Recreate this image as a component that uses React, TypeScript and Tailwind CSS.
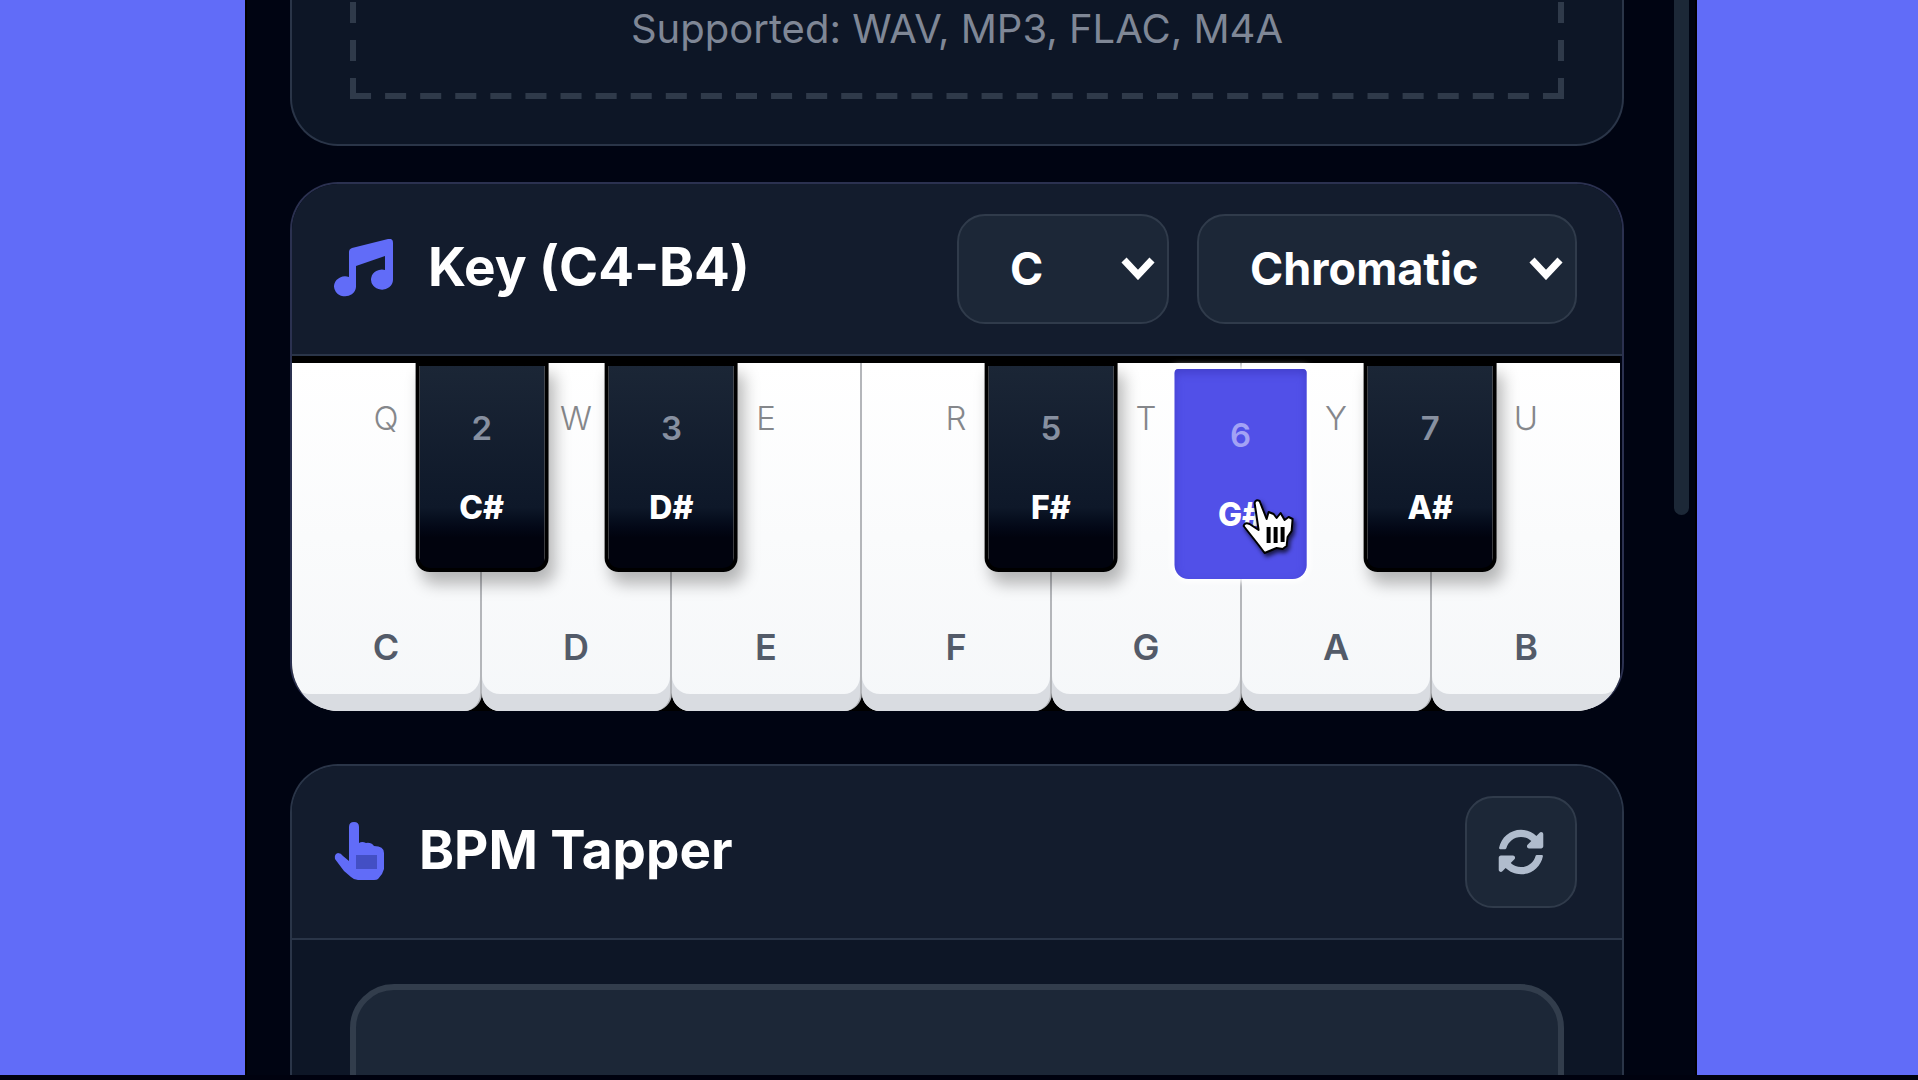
import { useState } from 'react'
import type { ReactNode } from 'react'
import { FaSyncAlt } from 'react-icons/fa'

type WhiteKey = {
  note: string
  shortcut: string
}

type BlackKey = {
  note: string
  shortcut: string
  // number of white keys to the left of it
  after: number
}

const whiteKeys: WhiteKey[] = [
  { note: 'C', shortcut: 'Q' },
  { note: 'D', shortcut: 'W' },
  { note: 'E', shortcut: 'E' },
  { note: 'F', shortcut: 'R' },
  { note: 'G', shortcut: 'T' },
  { note: 'A', shortcut: 'Y' },
  { note: 'B', shortcut: 'U' },
]

const blackKeys: BlackKey[] = [
  { note: 'C#', shortcut: '2', after: 1 },
  { note: 'D#', shortcut: '3', after: 2 },
  { note: 'F#', shortcut: '5', after: 4 },
  { note: 'G#', shortcut: '6', after: 5 },
  { note: 'A#', shortcut: '7', after: 6 },
]

const roots = ['C', 'C#', 'D', 'D#', 'E', 'F', 'F#', 'G', 'G#', 'A', 'A#', 'B']
const scales = ['Chromatic', 'Major', 'Minor']

function MusicIcon() {
  return (
    <svg viewBox="0 0 60 58" className="h-[58px] w-[60px] text-[#616cf8]" aria-hidden="true">
      <path
        fill="currentColor"
        d="M15 13Q15 10 18 9L54 0Q59 -1 59 4V41A11 10 0 1 1 51 31V17L22 27V48A11 10 0 1 1 15 38Z"
      />
    </svg>
  )
}

function TapIcon() {
  return (
    <svg viewBox="0 0 51 58" className="h-[58px] w-[51px] text-[#616cf8]" aria-hidden="true">
      <path
        fill="currentColor"
        d="M15 5Q15 0 20 0Q25 0 25 5V21Q28 19 32 21Q37 20 40 24Q50 24 50 31V47L48 52L44 57Q43 58 40 58H24Q20 58 17 55L10 49L1 37Q0 32 4 31Q7 31 9 34L15 39Z"
      />
      <rect x="22" y="33" width="21" height="14" fill="#434fc4" />
    </svg>
  )
}

function PointerCursor() {
  return (
    <svg
      viewBox="0 0 60 64"
      className="pointer-events-none absolute top-[124px] left-[66px] h-[64px] w-[60px] drop-shadow-[2px_3px_2px_rgba(0,0,0,0.7)]"
      aria-hidden="true"
    >
      <path
        d="M14 10Q15 6 19 8L26 26L28 19L33 21L36 25L40 20L44 27L48 24L52 26L51 38L47 44L46 53L42 56L36 55L24 60L18 52L3 33Q4 29 9 31L18 37Z"
        fill="white"
        stroke="black"
        strokeWidth="2"
        strokeLinejoin="round"
      />
      <path d="M28 34v16M35 34v16M42 34v15" stroke="black" strokeWidth="4" />
    </svg>
  )
}

function Select({ label, value, options, onChange, className }: {
  label: string
  value: string
  options: string[]
  onChange: (value: string) => void
  className: string
}) {
  return (
    <div className={`relative h-[110px] ${className}`}>
      <select
        aria-label={label}
        value={value}
        onChange={e => onChange(e.target.value)}
        className="h-full w-full appearance-none rounded-[28px] border-2 border-[#303b4b] bg-[#1c2737] pr-16 pl-[51px] text-[45px] font-bold text-white"
      >
        {options.map(option => (
          <option key={option}>{option}</option>
        ))}
      </select>
      <svg
        viewBox="0 0 36 24"
        className="pointer-events-none absolute top-[42px] right-[13px] h-6 w-9"
        aria-hidden="true"
      >
        <path d="M4 4l14 15L32 4" fill="none" stroke="white" strokeWidth="7" />
      </svg>
    </div>
  )
}

function CardHeader({ icon, title, children }: { icon: ReactNode; title: string; children: ReactNode }) {
  return (
    <div className="flex items-center justify-between border-b-2 border-[#2a3548] bg-[#131c2d] pt-[30px] pr-[45px] pb-[30px] pl-[42px]">
      <div className="flex items-center gap-[34px] pb-[3px]">
        {icon}
        <h2 className="text-[53px] leading-none font-bold text-white">{title}</h2>
      </div>
      {children}
    </div>
  )
}

function DropZone() {
  return (
    <div className="relative flex h-[99px] justify-center">
      <svg className="absolute inset-0 h-full w-full" aria-hidden="true">
        <g stroke="#2f3a4a" strokeWidth="12" strokeDasharray="21 14">
          <line x1="0" y1="100%" x2="100%" y2="100%" pathLength={1211} />
        </g>
        <g stroke="#2f3a4a" strokeWidth="12" strokeDasharray="21 17">
          <line x1="0" y1="100%" x2="0" y2="0" />
          <line x1="100%" y1="100%" x2="100%" y2="0" />
        </g>
      </svg>
      <p className="mt-1 text-[40px] leading-[50px] text-[#7f8796]">Supported: WAV, MP3, FLAC, M4A</p>
    </div>
  )
}

function Keyboard() {
  const [active, setActive] = useState('G#')

  return (
    <div className="relative mr-[2px] bg-black pt-[7px]">
      <div className="flex h-[348px]">
        {whiteKeys.map(({ note, shortcut }) => (
          <button
            key={note}
            onClick={() => setActive(note)}
            className="flex flex-1 flex-col items-center justify-between rounded-b-[18px] border-r-2 border-[#b4b6ba] bg-linear-to-b from-white to-[#f5f7f9] pt-[35px] pb-[40px] shadow-[inset_0_-17px_0_#d9dce1] last:border-r-0"
          >
            <span className="text-[33px] leading-10 font-light text-[#85878b]">{shortcut}</span>
            <span className="text-[36px] leading-12 font-semibold text-[#535b69]">{note}</span>
          </button>
        ))}
      </div>
      {blackKeys.map(({ note, shortcut, after }) => (
        <button
          key={note}
          onClick={() => setActive(note)}
          className={`absolute top-[6px] flex h-[210px] w-[10%] -translate-x-1/2 flex-col items-center rounded-b-[14px] ${
            active === note
              ? 'mt-[7px] rounded-t-[4px] bg-[#5150e8] pt-[46px] shadow-[inset_0_4px_8px_#4340cc,0_0_6px_3px_#ffffff]'
              : 'border-4 border-black bg-linear-to-b from-[#1b2636] via-[#0e1829] via-70% to-[#01030e] to-85% pt-[42px] shadow-[6px_12px_16px_rgba(0,0,0,0.28)]'
          }`}
          style={{ left: `${(after / 7) * 100}%` }}
        >
          <span className={`text-[33px] leading-10 font-semibold ${active === note ? 'text-[#a3a2f5]' : 'text-[#8790a0]'}`}>
            {shortcut}
          </span>
          <span className="mt-10 text-[32px] leading-10 font-extrabold text-white">{note}</span>
          {active === note && <PointerCursor />}
        </button>
      ))}
    </div>
  )
}

export default function App() {
  const [root, setRoot] = useState('C')
  const [scale, setScale] = useState('Chromatic')

  return (
    <div className="h-screen overflow-hidden border-b-5 border-[#00020f] bg-[#616cf8] pr-[221px] pl-[245px] font-[Inter,sans-serif]">
      <div className="flex h-full items-start border-x-2 border-black bg-[#000412]">
        <main className="mr-[50px] ml-[43px] min-w-0 flex-1">
          <section className="rounded-b-[48px] border-2 border-t-0 border-[#2a3548] bg-[#0d1626] px-[58px] pb-[45px]">
            <DropZone />
          </section>

          <section className="mt-9 overflow-hidden rounded-[48px] border-2 border-b-0 border-[#2b3150]">
            <CardHeader icon={<MusicIcon />} title="Key (C4-B4)">
              <div className="flex gap-7">
                <Select label="Root note" value={root} options={roots} onChange={setRoot} className="w-[212px]" />
                <Select label="Scale" value={scale} options={scales} onChange={setScale} className="w-[380px]" />
              </div>
            </CardHeader>
            <Keyboard />
          </section>

          <section className="mt-[53px] rounded-t-[48px] border-2 border-b-0 border-[#2a3548] bg-[#0d1626]">
            <div className="overflow-hidden rounded-t-[46px]">
              <CardHeader icon={<TapIcon />} title="BPM Tapper">
                <button
                  aria-label="Reset tapper"
                  className="flex size-28 items-center justify-center rounded-[28px] border-2 border-[#303b4b] bg-[#1c2737] text-[#b0bccd]"
                >
                  <FaSyncAlt className="size-[46px]" />
                </button>
              </CardHeader>
            </div>
            <div className="px-[58px] pt-11">
              <button
                aria-label="Tap"
                className="block h-[300px] w-full rounded-[44px] border-6 border-[#323d4c] bg-[#1c2737]"
              />
            </div>
          </section>
        </main>
        <div className="mr-[6px] h-[515px] w-[15px] rounded-b-full bg-[#1c2837]" />
      </div>
    </div>
  )
}
